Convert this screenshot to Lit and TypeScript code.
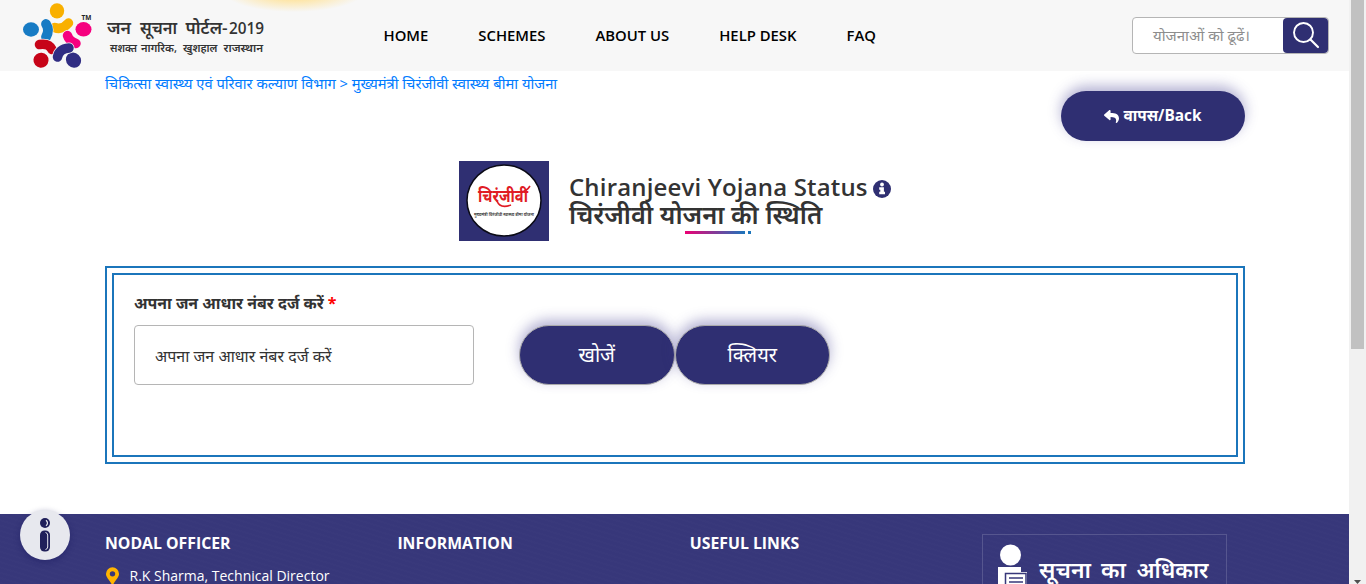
import { LitElement, html, css } from "lit";
import { customElement } from "lit/decorators.js";

@customElement("app-root")
export class AppRoot extends LitElement {
  static styles = css`
    :host { display: flex; width: 1366px; height: 584px; overflow: hidden; background: #fff;
      font-family: "Open Sans", "Noto Sans Devanagari", "Noto Sans", sans-serif; color: #333; position: relative; }
    * { box-sizing: border-box; }
    .page { width: 1349px; height: 584px; overflow: hidden; display: flex; flex-direction: column; }
    .header { height: 71px; flex: none; background: radial-gradient(ellipse 70px 20px at 294px -8px, #ffd97a 0%, #fde7ae 45%, rgba(247,247,247,0) 100%), #f7f7f7; display: flex; padding-left: 20px; }
    .logo { width: 260px; height: 71px; flex: none; overflow: visible; }
    .nav { display: flex; gap: 50px; margin-left: 103.500px; font-size: 14.850px; line-height: 71px; font-weight: 600; color: #000; white-space: nowrap; width: 748.500px; flex: none; }
    .search { width: 197px; height: 37px; margin-top: 17px; background: #fff; border: 1px solid #b5b5b5; border-radius: 4px; display: flex; justify-content: space-between; }
    .ph { font-size: 15px; line-height: 34px; color: #8d8d8d; padding-left: 20px; white-space: nowrap; }
    .sbtn { width: 45px; height: 35px; border-radius: 4px; background: #2f2f72; flex: none; }
    .main { height: 443px; flex: none; width: 1140px; margin-left: 105px; display: flex; flex-direction: column; }
    .crumb { height: 20px; line-height: 25px; font-size: 14.720px; color: #007bff; white-space: nowrap; }
    .pill { background: #2f2f72; color: #fff; display: flex; align-items: center; justify-content: center; white-space: nowrap; box-shadow: 0 -5px 13px rgba(58,52,140,.38); }
    .back { align-self: flex-end; width: 184px; height: 50px; border-radius: 25px; font-size: 15.400px; font-weight: 700; gap: 4px; }
    .title { display: flex; margin: 20px 0 0 354px; height: 80px; }
    .badge { width: 90px; height: 80px; flex: none; }
    .heads { margin-left: 20px; padding-top: 12px; white-space: nowrap; font-weight: 600; font-size: 24px; line-height: 28px; }
    .en { display: flex; align-items: center; gap: 5px; height: 28px; letter-spacing: .16px; }
    .en svg { margin-top: 4px; }
    .hi { height: 27px; line-height: 27px; font-size: 25.500px; }
    .rule { display: flex; gap: 3px; height: 3px; margin: 3px 0 0 116px; }
    .r1 { width: 60px; background: linear-gradient(90deg, #ec0074, #1b75bb); }
    .r2 { width: 3px; background: #1b75bb; }
    .frame { margin-top: 25px; height: 198px; border: 2px solid #1b75bb; padding: 5px; }
    .inner { height: 184px; border: 2px solid #1b75bb; padding: 16px 20px; display: flex; }
    .field { width: 340px; }
    .label { font-size: 15.900px; font-weight: 700; height: 34px; line-height: 25px; white-space: nowrap; }
    .star { color: red; }
    .input { height: 60px; border: 1px solid #b5b5b5; border-radius: 4px; padding-left: 20px; font-size: 16px; line-height: 60px; white-space: nowrap; }
    .btns { display: flex; margin: 34px 0 0 45px; }
    .big { width: 155.500px; height: 60px; border-radius: 30px; border: 1px solid #aaa; font-size: 20px; }
    .footer { height: 70px; background: repeating-linear-gradient(17deg, rgba(255,255,255,.008) 0 2px, transparent 2px 5px), #37377a; padding: 17px 0 0 105px; display: flex; color: #fff; overflow: hidden; }
    .col { width: 292.400px; flex: none; white-space: nowrap; }
    .col h3 { font-size: 15.800px; line-height: 24px; font-weight: 700; margin: 0; }
    .addr { display: flex; gap: 10.500px; margin-top: 11px; font-size: 14px; line-height: 20px; padding-left: 1px; }
    .pin { margin-top: 1px; }
    .rti { width: 245px; height: 90px; margin-top: 3px; border: 1px solid #56568f; flex: none; }
    .bar { width: 17px; height: 584px; background: #f1f1f1; flex: none; display: flex; flex-direction: column; justify-content: space-between; align-items: center; }
    .thumb { width: 13px; height: 349px; background: #c1c1c1; }
    .arrow { width: 7px; height: 4px; display: block; }
    .info { position: absolute; left: 20px; top: 510px; width: 50px; height: 50px; border-radius: 50%; background: #e7e8ee; box-shadow: 0 2px 6px rgba(20,20,90,.4); }
  `;

  logo() {
    return html`<svg class="logo" viewBox="20 0 260 71">
      <ellipse cx="57" cy="10.800" rx="7.200" ry="7.600" fill="#f9b000"/>
      <ellipse cx="31" cy="29.500" rx="8" ry="7.200" fill="#177bc4"/>
      <ellipse cx="83.500" cy="29.300" rx="8" ry="7.300" fill="#f6007f"/>
      <ellipse cx="41" cy="60.200" rx="7.600" ry="7.500" fill="#c70418" transform="rotate(-40 41 60.200)"/>
      <ellipse cx="73.500" cy="60.200" rx="8" ry="7.200" fill="#302d83" transform="rotate(45 73.500 60.200)"/>
      <g fill="none" stroke-linecap="round">
        <path d="M54.500 27.500 Q62 30.500 68.500 23" stroke="#f9b000" stroke-width="9.500"/>
        <path d="M46 24 Q50 30 46 37" stroke="#f7f7f7" stroke-width="11"/>
        <path d="M46 24 Q50 30 46 37" stroke="#177bc4" stroke-width="9.800"/>
        <path d="M67.500 35.500 Q69 41 76 43.500" stroke="#f7f7f7" stroke-width="11"/>
        <path d="M67.500 35.500 Q69 41 76 43.500" stroke="#f6007f" stroke-width="9.500"/>
        <path d="M39.500 44.500 Q49 43 52 49.500" stroke="#f7f7f7" stroke-width="11"/>
        <path d="M39.500 44.500 Q49 43 52 49.500" stroke="#c70418" stroke-width="9.600"/>
        <path d="M57.500 57 Q59 49 69 48" stroke="#f7f7f7" stroke-width="11"/>
        <path d="M57.500 57 Q59 49 69 48" stroke="#302d83" stroke-width="9.500"/>
      </g>
      <text x="81.500" y="19.500" font-size="6.500" font-weight="700" fill="#222">TM</text>
      <g font-size="17" font-weight="600" fill="#333">
        <text x="107" y="34" textLength="24" lengthAdjust="spacingAndGlyphs">जन</text>
        <text x="140" y="34" textLength="37" lengthAdjust="spacingAndGlyphs">सूचना</text>
        <text x="185.500" y="34" textLength="42" lengthAdjust="spacingAndGlyphs">पोर्टल-</text>
        <text x="229" y="34" textLength="35" lengthAdjust="spacingAndGlyphs">2019</text>
      </g>
      <g font-size="11.500" font-weight="600" fill="#333">
        <text x="110" y="52" textLength="27" lengthAdjust="spacingAndGlyphs">सशक्त</text>
        <text x="141" y="52" textLength="36" lengthAdjust="spacingAndGlyphs">नागरिक,</text>
        <text x="183" y="52" textLength="34.500" lengthAdjust="spacingAndGlyphs">खुशहाल</text>
        <text x="223.500" y="52" textLength="39.500" lengthAdjust="spacingAndGlyphs">राजस्थान</text>
      </g>
    </svg>`;
  }

  render() {
    return html`
      <div class="page">
        <header class="header">
          ${this.logo()}
          <nav class="nav"><span>HOME</span><span>SCHEMES</span><span>ABOUT US</span><span>HELP DESK</span><span>FAQ</span></nav>
          <div class="search"><span class="ph">योजनाओं को ढूढें।</span>
            <svg class="sbtn" viewBox="0 0 45 35"><circle cx="20.500" cy="14.500" r="9.500" fill="none" stroke="#fff" stroke-width="1.900"/><path d="M27.500 21.500L35 29" stroke="#fff" stroke-width="2.200" stroke-linecap="round"/></svg>
          </div>
        </header>
        <main class="main">
          <div class="crumb">चिकित्सा स्वास्थ्य एवं परिवार कल्याण विभाग &gt; मुख्यमंत्री चिरंजीवी स्वास्थ्य बीमा योजना</div>
          <div class="pill back"><svg width="15" height="15" viewBox="0 0 512 512"><path fill="#fff" d="M8.300 189.800L184.300 37.900C199.700 24.500 224 35.300 224 56v80.100c160.600 1.800 288 34 288 186.200 0 61.400-39.600 122.300-83.300 154.100-13.700 9.900-33.100-2.500-28.100-18.600C446 312.900 379.100 274.200 224 272v88c0 20.700-24.300 31.500-39.700 18.200l-176-152c-11-9.600-11-26.800 0-36.400z"/></svg><span>वापस/Back</span></div>
          <section class="title">
            <svg class="badge" viewBox="0 0 90 80"><rect width="90" height="80" fill="#2f2f72"/><ellipse cx="45" cy="39.500" rx="37" ry="35.500" fill="#fff" stroke="#0b0b16" stroke-width="1.500"/>
              <text x="19" y="41" font-size="18" font-weight="700" fill="#e01b24" textLength="50" lengthAdjust="spacingAndGlyphs">चिरंजीवी</text>
              <path d="M38 40Q41 48 52 44M62 31Q68 30 71 25" fill="none" stroke="#e01b24" stroke-width="1.600"/>
              <text x="15" y="54.500" font-size="5" font-weight="600" fill="#333" textLength="60" lengthAdjust="spacingAndGlyphs">मुख्यमंत्री चिरंजीवी स्वास्थ्य बीमा योजना</text></svg>
            <div class="heads">
              <div class="en"><span>Chiranjeevi Yojana Status</span><svg width="18" height="18" viewBox="0 0 18 18"><circle cx="9" cy="9" r="9" fill="#2f2f72"/><circle cx="9" cy="4.500" r="1.900" fill="#fff"/><path d="M6.200 7.200H10.900V11.800H12V14.300H6.200V11.800H7.300V9.700H6.200Z" fill="#fff"/></svg></div>
              <div class="hi">चिरंजीवी योजना की स्थिति</div>
              <div class="rule"><div class="r1"></div><div class="r2"></div></div>
            </div>
          </section>
          <section class="frame"><div class="inner">
            <div class="field"><div class="label">अपना जन आधार नंबर दर्ज करें <span class="star">*</span></div><div class="input">अपना जन आधार नंबर दर्ज करें</div></div>
            <div class="btns"><div class="pill big">खोजें</div><div class="pill big">क्लियर</div></div>
          </div></section>
        </main>
        <footer class="footer">
          <div class="col"><h3>NODAL OFFICER</h3><div class="addr"><svg class="pin" width="13" height="18" viewBox="0 0 384 512"><path fill="#ffb400" d="M172 502C27 291 0 270 0 192a192 192 0 0 1 384 0c0 78-27 99-172 310a24 24 0 0 1-40 0zM192 272a80 80 0 1 0 0-160 80 80 0 0 0 0 160z"/></svg><span>R.K Sharma, Technical Director</span></div></div>
          <div class="col"><h3>INFORMATION</h3></div>
          <div class="col"><h3>USEFUL LINKS</h3></div>
          <svg class="rti" viewBox="0 0 243 88"><circle cx="27.500" cy="20" r="10.500" fill="#fff"/><path d="M15 32H38V37H44V60H15Z" fill="#fff"/><path d="M22.500 60V38.500H43V60" fill="#fff" stroke="#37377a" stroke-width="1.500"/><path d="M26 43H40M26 47H40M26 51H40" stroke="#37377a" stroke-width="1.400"/>
            <g font-size="23" font-weight="600" fill="#fff">
              <text x="56" y="42.500" textLength="52" lengthAdjust="spacingAndGlyphs">सूचना</text>
              <text x="118" y="42.500" textLength="25" lengthAdjust="spacingAndGlyphs">का</text>
              <text x="153.500" y="42.500" textLength="72" lengthAdjust="spacingAndGlyphs">अधिकार</text>
            </g></svg>
        </footer>
      </div>
      <div class="bar"><div class="thumb"></div><svg class="arrow" viewBox="0 0 7 4"><path d="M0 0H7L3.500 4Z" fill="#505050"/></svg></div>
      <svg class="info" viewBox="0 0 50 50"><circle cx="25" cy="13" r="5" fill="#20205a"/><rect x="20" y="20.500" width="10" height="21" rx="4.500" fill="#20205a"/><path d="M26 10.200Q29 13 26 15.800" fill="none" stroke="#e7e8ee" stroke-width="1.200"/><path d="M25.500 22.500Q27.700 23 27.700 25V37Q27.700 39 25.500 39.500" fill="none" stroke="#e7e8ee" stroke-width="1"/></svg>
    `;
  }
}
